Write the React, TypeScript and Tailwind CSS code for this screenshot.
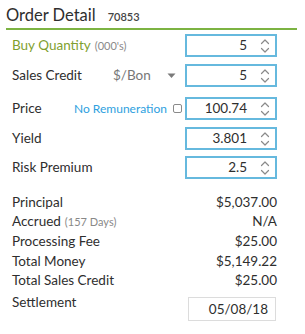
import React from "react";

const Spinner = () => (
  <svg width="10" height="16" viewBox="0 0 10 16" fill="none" stroke="#8a8a8a" strokeWidth="1.2" strokeLinecap="round" strokeLinejoin="round">
    <path d="M1.5 5.5 L5 2 L8.5 5.5" />
    <path d="M1.5 10.5 L5 14 L8.5 10.5" />
  </svg>
);

const NumBox = ({ value }: { value: string }) => (
  <div className="flex items-center justify-end w-[92px] h-[23px] border-2 border-[#66b9de] bg-white pr-[5px]">
    <span className="text-[13.5px] text-[#2e2e2e] mr-[13px] leading-none">{value}</span>
    <Spinner />
  </div>
);

const SumRow = ({ label, value, note }: { label: string; value: string; note?: string }) => (
  <div className="flex items-center justify-between h-[19.7px] w-[265px]">
    <span className="text-[13.5px] text-[#2e2e2e]">
      {label}
      {note && <span className="text-[11px] text-[#888] ml-[4px]">{note}</span>}
    </span>
    <span className="text-[13.5px] text-[#2e2e2e]">{value}</span>
  </div>
);

export default function App() {
  return (
    <div className="w-[305px] h-[334px] bg-white pl-[6px] pt-[7px] font-['Lato','Open_Sans',sans-serif]">
      <div className="flex items-baseline w-[291px] h-[23px] border-b-2 border-[#7cb342]">
        <span className="text-[16.5px] text-[#2e2e2e] leading-none">Order Detail</span>
        <span className="text-[11px] text-[#444] ml-[12px] font-semibold">70853</span>
      </div>

      <div className="pl-[6px] pt-[4px]">
        <div className="flex items-center justify-between w-[265px]">
          <span className="text-[13.5px] text-[#7f9f2f]">
            Buy Quantity<span className="text-[11px] text-[#8a8a8a] ml-[4px]">(000's)</span>
          </span>
          <NumBox value="5" />
        </div>

        <div className="flex items-center w-[265px] mt-[7px]">
          <span className="text-[13.5px] text-[#2e2e2e] w-[101px]">Sales Credit</span>
          <span className="text-[13.5px] text-[#777]">$/Bon</span>
          <svg className="ml-[16px]" width="9" height="6" viewBox="0 0 9 6">
            <path d="M0.5 0.5 H8.5 L4.5 5 Z" fill="#7a7a7a" />
          </svg>
          <div className="ml-auto">
            <NumBox value="5" />
          </div>
        </div>

        <div className="flex items-center w-[265px] mt-[10px]">
          <span className="text-[13.5px] text-[#2e2e2e] w-[62px]">Price</span>
          <span className="text-[12px] text-[#2e9fe0]">No Remuneration</span>
          <span className="ml-[6px] w-[9px] h-[9px] border border-[#8a8a8a] rounded-[2px]" />
          <div className="ml-auto">
            <NumBox value="100.74" />
          </div>
        </div>

        <div className="flex items-center justify-between w-[265px] mt-[7px]">
          <span className="text-[13.5px] text-[#2e2e2e]">Yield</span>
          <NumBox value="3.801" />
        </div>

        <div className="flex items-center justify-between w-[265px] mt-[6px]">
          <span className="text-[13.5px] text-[#2e2e2e]">Risk Premium</span>
          <NumBox value="2.5" />
        </div>

        <div className="mt-[13px]">
          <SumRow label="Principal" value="$5,037.00" />
          <SumRow label="Accrued" note="(157 Days)" value="N/A" />
          <SumRow label="Processing Fee" value="$25.00" />
          <SumRow label="Total Money" value="$5,149.22" />
          <SumRow label="Total Sales Credit" value="$25.00" />
        </div>

        <div className="flex items-start justify-between w-[264px] mt-[-1px]">
          <span className="text-[13.5px] text-[#2e2e2e] mt-[3px]">Settlement</span>
          <div className="flex items-center justify-end w-[88px] h-[24px] border border-[#dcdcdc] pr-[7px] mt-[8px]">
            <span className="text-[13.5px] text-[#2e2e2e]">05/08/18</span>
          </div>
        </div>
      </div>
    </div>
  );
}
